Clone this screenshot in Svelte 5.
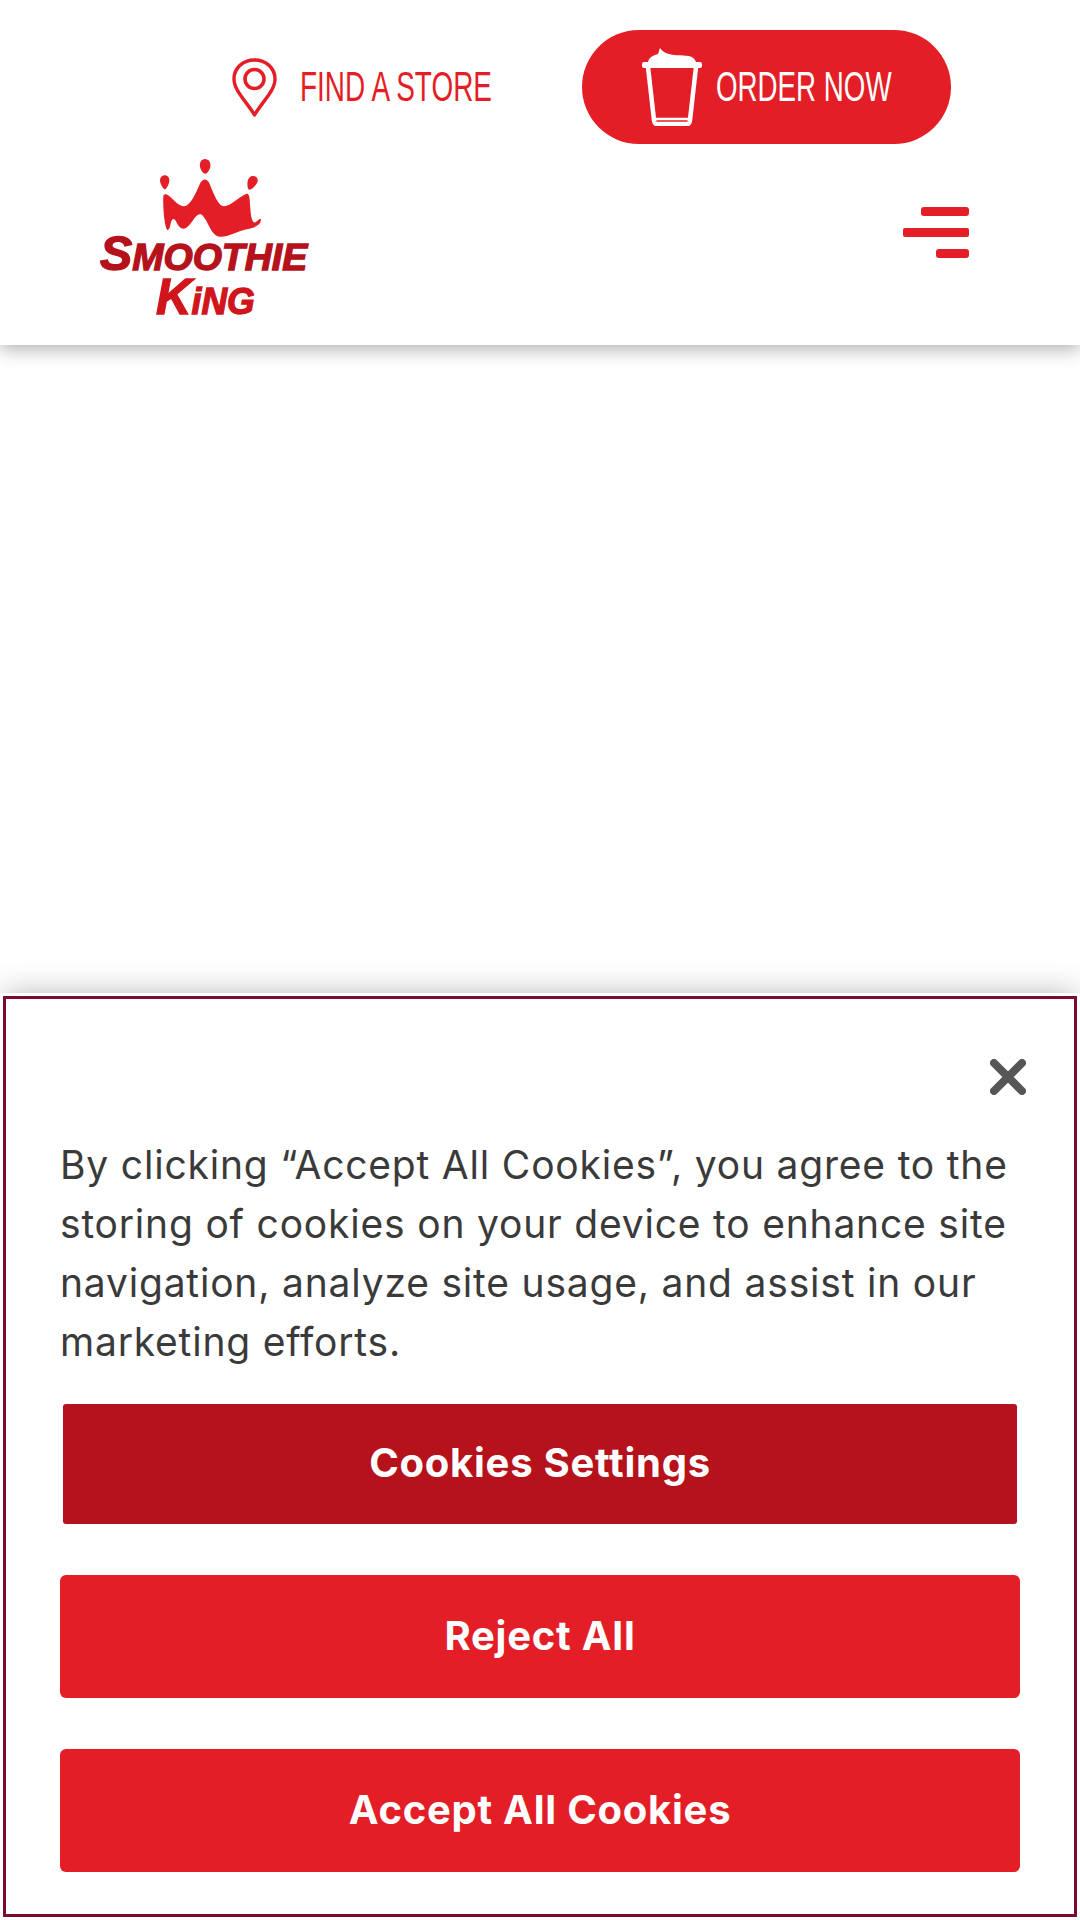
<script>
  const bars = ['b1', 'b2', 'b3'];
  const lines = [
    'By clicking “Accept All Cookies”, you agree to the',
    'storing of cookies on your device to enhance site',
    'navigation, analyze site usage, and assist in our',
    'marketing efforts.'
  ];
</script>

<div class="page">
  <header class="header">
    <div class="top">
      <a class="store">
        <svg class="pin" viewBox="0 0 45 59" width="45" height="59" aria-hidden="true">
          <path d="M22.5 57 C15 44 2 33 2 21 C2 10 11 2 22.5 2 C34 2 43 10 43 21 C43 33 30 44 22.5 57 Z" fill="none" stroke="#e41e26" stroke-width="3.4" stroke-linejoin="round"/>
          <circle cx="22.5" cy="21" r="9.5" fill="none" stroke="#e41e26" stroke-width="3.6"/>
        </svg>
        <span class="cond store-text">FIND A STORE</span>
      </a>
      <a class="order">
        <svg class="cup" viewBox="0 0 60 78" width="60" height="78" aria-hidden="true">
          <path d="M6 14 C7 9 12 7 16 6 C17 4 17 2 18 0 C21 4 25 6 32 7 C40 8 49 6 53 12 L54 14 Z" fill="#fff"/>
          <rect x="0" y="14" width="60" height="6" rx="2" fill="#fff"/>
          <path d="M6 19 L12 72 C12.300 75 13 76 15 76 L45 76 C47 76 47.700 75 48 72 L54 19" fill="none" stroke="#fff" stroke-width="4.500"/>
          <path d="M11 71 L49 71" stroke="#fff" stroke-width="2.500"/>
        </svg>
        <span class="cond order-text">ORDER NOW</span>
      </a>
    </div>
    <div class="brand">
      <svg class="logo" viewBox="0 0 780 600" width="260" height="200" role="img" aria-label="Smoothie King">
        <g fill="#e41e26">
          <path d="M255 106 C266 106 270 118 267 128 C264 138 258 148 254 148 C250 148 242 134 240 124 C239 113 246 106 255 106 Z"/>
          <path d="M375 57 C386 57 393 68 391 80 C389 90 381 101 376 101 C370 101 362 90 360 80 C358 68 364 57 375 57 Z"/>
          <path d="M519 108 C528 108 535 115 533 124 C531 134 516 149 508 149 C503 149 501 136 503 124 C505 114 511 108 519 108 Z"/>
          <path d="M250 168 C252 160 262 162 272 172 C285 184 296 198 312 199 C330 198 348 160 358 135 C364 118 378 112 386 126 C398 150 412 198 432 199 C452 198 478 170 498 162 C505 160 508 166 509 178 C511 205 512 240 521 247 C528 250 535 236 542 236 C546 250 530 262 508 266 C478 270 445 292 420 290 C392 288 385 240 365 224 C345 215 335 262 312 266 C290 268 290 232 278 238 C270 244 272 270 263 270 C254 266 248 200 250 168 Z"/>
        </g>
        <text class="mark mark-top" x="60" y="391" textLength="622" lengthAdjust="spacingAndGlyphs"><tspan font-size="144">S</tspan><tspan font-size="112">MOOTHIE</tspan></text>
        <text class="mark mark-low" x="228" y="521" textLength="296" lengthAdjust="spacingAndGlyphs"><tspan font-size="150">K</tspan><tspan font-size="108">iNG</tspan></text>
      </svg>
      <div class="menu" aria-label="Menu">
        {#each bars as b}<span class="bar {b}"></span>{/each}
      </div>
    </div>
  </header>

  <section class="dialog">
    <div class="close-row">
      <svg class="close" viewBox="0 0 36 36" width="36" height="36" aria-label="Close">
        <path d="M4 4 L32 32 M32 4 L4 32" stroke="#565656" stroke-width="8" stroke-linecap="round"/>
      </svg>
    </div>
    <p class="copy">
      {#each lines as l}<span class="line">{l}</span>{/each}
    </p>
    <div class="actions">
      <button class="btn dark">Cookies Settings</button>
      <button class="btn after-dark">Reject All</button>
      <button class="btn">Accept All Cookies</button>
    </div>
  </section>
</div>

<style>
  :global(body) {
    margin: 0;
    background: #fff;
  }
  .page {
    width: 1080px;
    height: 1920px;
    display: flex;
    flex-direction: column;
    overflow: hidden;
    font-family: "Inter", "Liberation Sans", sans-serif;
  }
  .header {
    height: 345px;
    box-sizing: border-box;
    background: #fff;
    box-shadow: 0 4px 18px rgba(0, 0, 0, 0.32);
    padding-top: 30px;
  }
  .top {
    display: flex;
    align-items: center;
    height: 114px;
    padding-left: 232px;
  }
  .store {
    display: flex;
    align-items: center;
    width: 350px;
  }
  .pin {
    margin-right: 23px;
    flex: none;
  }
  .cond {
    font-family: "Liberation Sans", sans-serif;
    font-size: 42px;
    line-height: 1;
    white-space: nowrap;
    transform-origin: left center;
    display: inline-block;
  }
  .store-text {
    color: #e41e26;
    transform: scaleX(0.665);
  }
  .order {
    width: 369px;
    height: 114px;
    border-radius: 57px;
    background: #e41e26;
    display: flex;
    align-items: center;
    padding-left: 60px;
    box-sizing: border-box;
  }
  .cup {
    flex: none;
    margin-right: 14px;
  }
  .order-text {
    color: #fff;
    transform: scaleX(0.66);
  }
  .brand {
    display: flex;
    justify-content: space-between;
    align-items: flex-start;
    margin-top: -4px;
    padding-left: 80px;
    padding-right: 111px;
  }
  .logo {
    display: block;
  }
  .mark {
    font-family: "Liberation Sans", sans-serif;
    font-weight: 700;
    font-style: italic;
    stroke-width: 4;
  }
  .mark-top {
    fill: #b5121b;
    stroke: #b5121b;
  }
  .mark-low {
    fill: #d0151d;
    stroke: #d0151d;
  }
  .menu {
    display: flex;
    flex-direction: column;
    align-items: flex-end;
    gap: 12px;
    margin-top: 67px;
  }
  .bar {
    display: block;
    height: 9px;
    background: #e41e26;
    border-radius: 3px;
  }
  .b1 { width: 48px; }
  .b2 { width: 66px; border-radius: 2px; }
  .b3 { width: 33px; }
  .dialog {
    margin: auto 3px 3px;
    height: 921px;
    box-sizing: border-box;
    border: 3px solid #7c0a2c;
    background: #fff;
    box-shadow: 0 0 0 3px #fff, 0 0 32px rgba(0, 0, 0, 0.32);
    padding: 0 54px;
    display: flex;
    flex-direction: column;
  }
  .close-row {
    display: flex;
    justify-content: flex-end;
    padding-top: 60px;
    margin-right: -6px;
  }
  .copy {
    margin: 40px 0 0;
    font-size: 39px;
    letter-spacing: 0.8px;
    line-height: 59px;
    color: #3a3a3a;
    white-space: nowrap;
  }
  .line {
    display: block;
  }
  .actions {
    display: flex;
    flex-direction: column;
    margin-top: 30px;
  }
  .btn {
    height: 123px;
    border: 0;
    border-radius: 6px;
    background: #e41e26;
    color: #fff;
    font-family: inherit;
    font-size: 40px;
    font-weight: 700;
    letter-spacing: 0.75px;
    margin-top: 51px;
    padding: 0 0 3px;
  }
  .btn.dark {
    margin-top: 0;
    height: 126px;
    background: #b5121b;
    border: 3px solid #fff;
  }
  .btn.after-dark {
    margin-top: 48px;
  }
</style>
